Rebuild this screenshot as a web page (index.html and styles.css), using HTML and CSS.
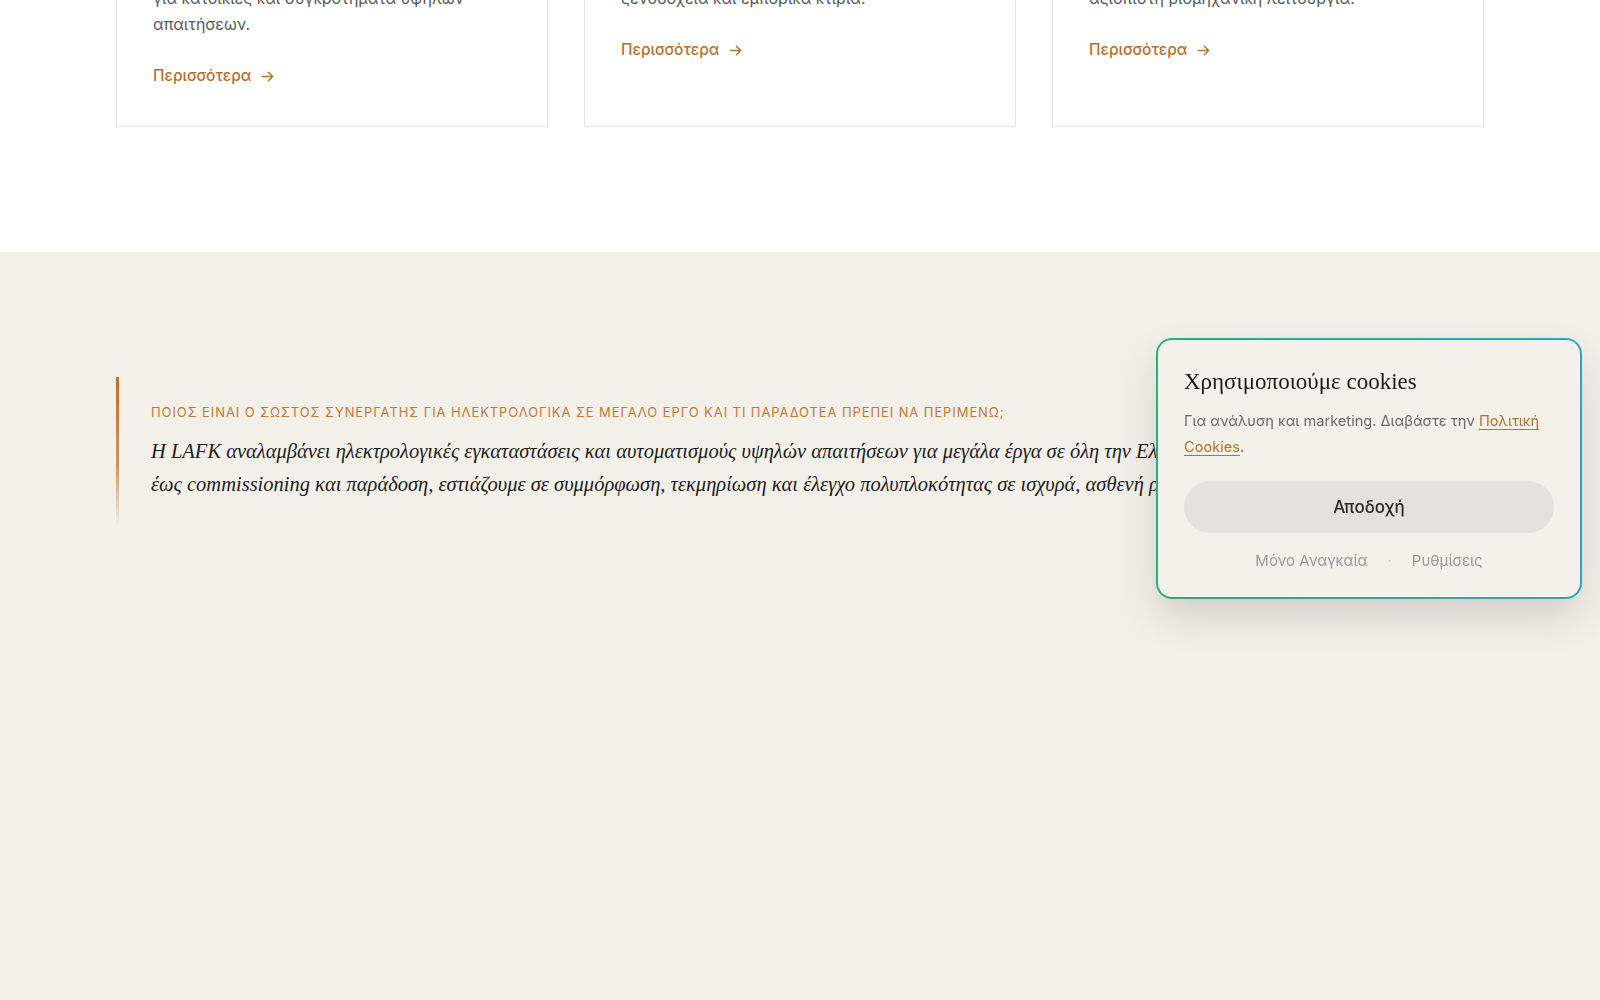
FILE: index.html
```html
<!DOCTYPE html>
<html lang="el">
<head>
    <meta charset="UTF-8">
    <meta name="viewport" content="width=device-width, initial-scale=1.0">
    <title>LAFK — Ηλεκτρολογικά Έργα</title>
    <link rel="stylesheet" href="styles.css">
</head>
<body>
    <!-- Services -->
    <section class="services">
        <div class="container cards">
            <article class="card">
                <div class="card-icon">
                    <svg viewBox="0 0 24 24" width="26" height="26" fill="none" stroke="currentColor" stroke-width="1.6" stroke-linecap="round" stroke-linejoin="round"><path d="M3 11l9-7 9 7"/><path d="M5 10v10h14V10"/></svg>
                </div>
                <h3>Οικιακά Έργα</h3>
                <p>Ολοκληρωμένες ηλεκτρολογικές λύσεις για&nbsp;κατοικίες και συγκροτήματα υψηλών απαιτήσεων.</p>
                <a class="more" href="#">Περισσότερα
                    <svg viewBox="0 0 16 16" width="15" height="15" fill="none" stroke="currentColor" stroke-width="1.6" stroke-linecap="round" stroke-linejoin="round"><path d="M2.5 8h11M9 3.5L13.5 8 9 12.5"/></svg>
                </a>
            </article>
            <article class="card">
                <div class="card-icon">
                    <svg viewBox="0 0 24 24" width="26" height="26" fill="none" stroke="currentColor" stroke-width="1.6" stroke-linecap="round" stroke-linejoin="round"><rect x="4" y="3" width="16" height="18" rx="1"/><path d="M9 7h2M13 7h2M9 11h2M13 11h2M10 21v-4h4v4"/></svg>
                </div>
                <h3>Επαγγελματικά Έργα</h3>
                <p>Λύσεις υψηλής απόδοσης για γραφεία, ξενοδοχεία&nbsp;και εμπορικά κτίρια.</p>
                <a class="more" href="#">Περισσότερα
                    <svg viewBox="0 0 16 16" width="15" height="15" fill="none" stroke="currentColor" stroke-width="1.6" stroke-linecap="round" stroke-linejoin="round"><path d="M2.5 8h11M9 3.5L13.5 8 9 12.5"/></svg>
                </a>
            </article>
            <article class="card">
                <div class="card-icon">
                    <svg viewBox="0 0 24 24" width="26" height="26" fill="none" stroke="currentColor" stroke-width="1.6" stroke-linecap="round" stroke-linejoin="round"><path d="M3 21V10l6 4V10l6 4V6l6 4v11z"/></svg>
                </div>
                <h3>Βιομηχανικά Έργα</h3>
                <p>Πίνακες ελέγχου και αυτοματισμοί για αξιόπιστη&nbsp;βιομηχανική λειτουργία.</p>
                <a class="more" href="#">Περισσότερα
                    <svg viewBox="0 0 16 16" width="15" height="15" fill="none" stroke="currentColor" stroke-width="1.6" stroke-linecap="round" stroke-linejoin="round"><path d="M2.5 8h11M9 3.5L13.5 8 9 12.5"/></svg>
                </a>
            </article>
        </div>
    </section>

    <!-- Answer block -->
    <section class="faq">
        <div class="container">
            <blockquote class="answer">
                <div class="answer-label">Ποιος είναι ο σωστός συνεργάτης για ηλεκτρολογικά σε μεγάλο έργο και τι παραδοτέα πρέπει να περιμένω;</div>
                <p>Η LAFK αναλαμβάνει ηλεκτρολογικές εγκαταστάσεις και αυτοματισμούς υψηλών απαιτήσεων για μεγάλα έργα σε όλη την Ελλάδα. Από τον σχεδιασμό και τη μελέτη έως&nbsp;commissioning και παράδοση, εστιάζουμε σε συμμόρφωση, τεκμηρίωση και έλεγχο πολυπλοκότητας σε ισχυρά, ασθενή ρεύματα και BMS.</p>
            </blockquote>
        </div>
    </section>

    <!-- Cookie consent -->
    <div class="cookie">
        <h4 class="cookie-title">Χρησιμοποιούμε cookies</h4>
        <p class="cookie-text">Για ανάλυση και marketing. Διαβάστε την <a href="#">Πολιτική Cookies</a>.</p>
        <button class="cookie-accept">Αποδοχή</button>
        <div class="cookie-links">
            <a href="#">Μόνο Αναγκαία</a>
            <span class="dot">·</span>
            <a href="#">Ρυθμίσεις</a>
        </div>
    </div>
</body>
</html>
```

FILE: styles.css
```css
body {
    margin: 0;
    padding: 0;
    background: #f3f0e9;
    font-family: Inter, 'Noto Sans', sans-serif;
    color: #1d1d1d;
    overflow: hidden;
    height: 100vh;
}

a {
    text-decoration: none;
    color: inherit;
}

.container {
    width: 1368px;
    margin: 0 auto;
}

/* services */

.services {
    background: #ffffff;
    margin-top: -196px;
    padding-bottom: 125px;
}

.cards {
    display: grid;
    grid-template-columns: repeat(3, 1fr);
    gap: 36px;
}

.card {
    border: 1px solid #e6e4e0;
    background: #ffffff;
    padding: 40px 36px 38px;
    display: flex;
    flex-direction: column;
    align-items: flex-start;
}

.card-icon {
    width: 48px;
    height: 48px;
    border-radius: 50%;
    background: #f6efe6;
    color: #b8712d;
    display: flex;
    align-items: center;
    justify-content: center;
    margin-bottom: 24px;
}

.card h3 {
    margin: 0 0 12px;
    font-family: 'Liberation Serif', serif;
    font-weight: 400;
    font-size: 24px;
    line-height: 30px;
}

.card p {
    margin: 0;
    font-size: 16px;
    line-height: 26px;
    color: #5a5a5a;
}

.more {
    margin-top: 27px;
    display: flex;
    align-items: center;
    gap: 9px;
    font-size: 15.5px;
    line-height: 24px;
    font-weight: 500;
    color: #b5712e;
}

/* answer */

.faq {
    padding: 125px 0;
    min-height: 900px;
}

.answer {
    margin: 0;
    border-left: 3px solid transparent;
    border-image: linear-gradient(180deg, #bf6d26 0%, #cf9461 60%, rgba(207, 148, 97, 0) 100%) 1;
    padding: 25px 0 24px 32px;
}

.answer-label {
    font-size: 13px;
    line-height: 20px;
    letter-spacing: 0.07em;
    text-transform: uppercase;
    color: #c27a37;
    margin-bottom: 13px;
}

.answer p {
    margin: 0;
    font-family: 'Liberation Serif', serif;
    font-style: italic;
    font-size: 20.5px;
    line-height: 32.5px;
    color: #1c1c1c;
}

/* cookie popup */

.cookie {
    position: fixed;
    top: 338px;
    right: 18px;
    width: 370px;
    padding: 26px 26px 24px;
    border: 2px solid transparent;
    border-radius: 16px;
    background: linear-gradient(#f4f1eb, #f4f1eb) padding-box,
                linear-gradient(90deg, #25b07c 0%, #2aa6c4 100%) border-box;
    box-shadow: 0 18px 40px -4px rgba(60, 50, 40, 0.2);
}

.cookie-title {
    margin: 0 0 13px;
    padding-top: 2px;
    font-family: 'Liberation Serif', serif;
    font-weight: 400;
    font-size: 23px;
    line-height: 28px;
    color: #1a1a1a;
}

.cookie-text {
    margin: 0;
    font-size: 14.6px;
    line-height: 25.5px;
    color: #6a6a6a;
}

.cookie-text a {
    color: #b5712e;
    text-decoration: underline;
    text-underline-offset: 3px;
}

.cookie-accept {
    display: block;
    width: 100%;
    height: 52px;
    margin-top: 21px;
    border: none;
    border-radius: 26px;
    background: #e3e2dc;
    font-family: inherit;
    font-size: 17px;
    font-weight: 500;
    color: #2a2a2a;
}

.cookie-links {
    margin-top: 16px;
    display: flex;
    justify-content: center;
    align-items: center;
    gap: 20px;
    font-size: 15px;
    line-height: 24px;
    color: #9a9a9a;
}

.cookie-links .dot {
    color: #d0cec8;
}
```
